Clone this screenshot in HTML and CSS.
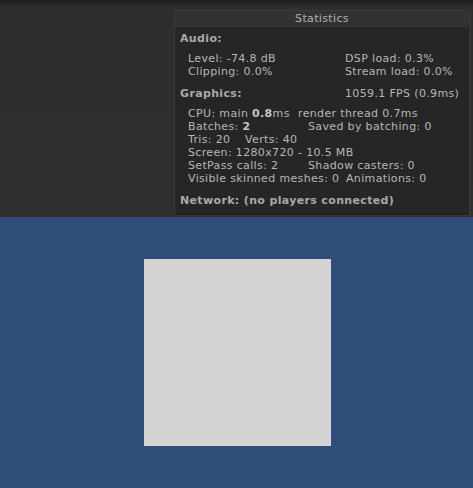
FILE: index.html
```html
<!DOCTYPE html>
<html lang="en">
<head>
    <meta charset="UTF-8">
    <title>Game View</title>
    <link rel="stylesheet" href="styles.css">
</head>
<body>
    <div class="game-top">
        <div class="stats-window">
            <div class="stats-title">Statistics</div>
            <div class="stats-body">
                <div class="heading">Audio:</div>
                <div class="group">
                    <div class="row"><span class="col-audio">Level: -74.8 dB</span><span>DSP load: 0.3%</span></div>
                    <div class="row"><span class="col-audio">Clipping: 0.0%</span><span>Stream load: 0.0%</span></div>
                </div>
                <div class="row heading-row"><span class="heading col-graphics">Graphics:</span><span>1059.1 FPS (0.9ms)</span></div>
                <div class="group">
                    <div class="row"><span class="col-cpu">CPU: main <b>0.8</b>ms</span><span>render thread 0.7ms</span></div>
                    <div class="row"><span class="col-wide">Batches: <b>2</b></span><span>Saved by batching: 0</span></div>
                    <div class="row"><span class="col-tris">Tris: 20</span><span>Verts: 40</span></div>
                    <div class="row"><span>Screen: 1280x720 - 10.5 MB</span></div>
                    <div class="row"><span class="col-wide">SetPass calls: 2</span><span>Shadow casters: 0</span></div>
                    <div class="row"><span class="col-skinned">Visible skinned meshes: 0</span><span>Animations: 0</span></div>
                </div>
                <div class="heading network">Network: (no players connected)</div>
            </div>
        </div>
    </div>
    <div class="game-bottom">
        <div class="quad"></div>
    </div>
</body>
</html>
```

FILE: styles.css
```css
body {
    margin: 0;
    padding: 0;
    width: 473px;
    height: 488px;
    overflow: hidden;
    font-family: "DejaVu Sans", Verdana, sans-serif;
    font-size: 11px;
    letter-spacing: 0.35px;
    color: #b6b6b6;
}

.game-top {
    height: 217px;
    background: linear-gradient(#1f1f1f 0px, #2e2e2e 8px, #2f2f2f 100%);
    display: flex;
    justify-content: flex-end;
    padding: 10px 3px 0 0;
    box-sizing: border-box;
}

.stats-window {
    width: 296px;
    height: 205px;
    background-color: #262626;
    border: 1px solid #3c3c3c;
    border-right-color: #333;
    border-bottom-color: #1c1c1c;
    border-radius: 3px;
    box-shadow: 1px 1px 0 #3a3a3a;
    box-sizing: border-box;
}

.stats-title {
    height: 16px;
    line-height: 16px;
    text-align: center;
    background-color: #323232;
    color: #b0b0b0;
    border-bottom: 1px solid #2a2a2a;
}

.stats-body {
    padding: 4px 0 0 5px;
}

.heading {
    font-weight: bold;
    color: #a9a9a9;
    height: 13px;
    line-height: 13px;
}

.group {
    padding: 7px 0 9px 8px;
}

.row {
    display: flex;
    height: 13px;
    line-height: 13px;
    white-space: nowrap;
}

.col-audio {
    width: 157px;
}

.col-graphics {
    width: 165px;
}

.col-cpu {
    width: 110px;
}

.col-wide {
    width: 120px;
}

.col-tris {
    width: 57px;
}

.col-skinned {
    width: 158px;
}

.row b {
    color: #c4c4c4;
}

.game-bottom {
    height: 271px;
    background-color: #304d7a;
    padding: 42px 0 0 144px;
    box-sizing: border-box;
}

.quad {
    width: 187px;
    height: 187px;
    background-color: #d4d4d4;
}
```
